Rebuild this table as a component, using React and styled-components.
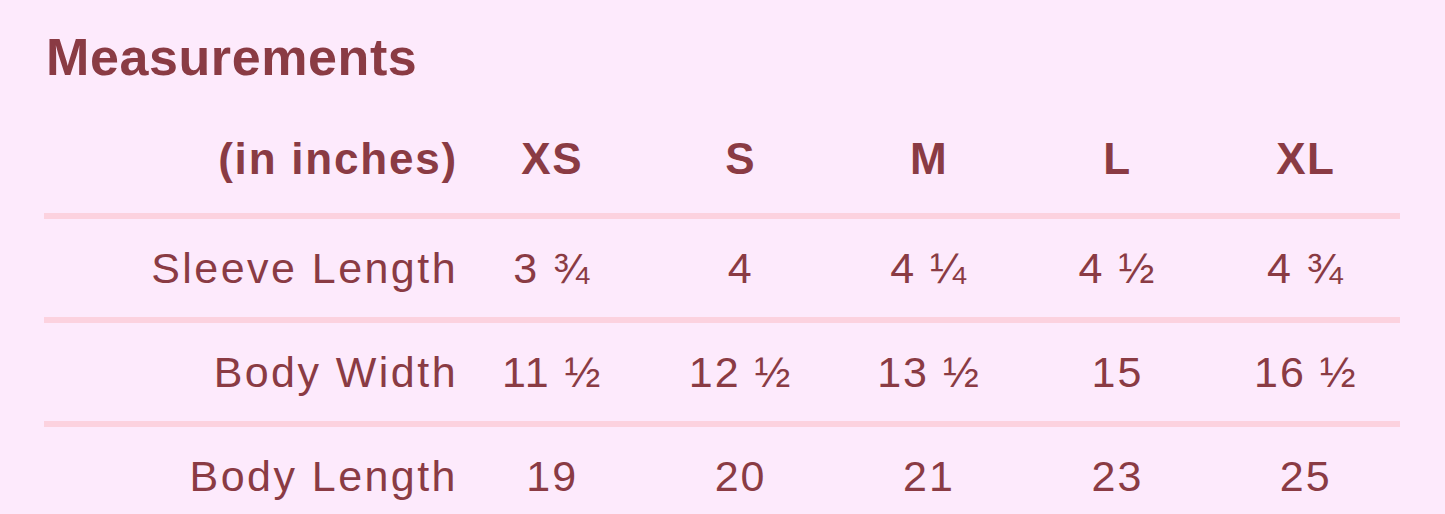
import React from "react";
import styled, { createGlobalStyle } from "styled-components";

const sizes = ["XS", "S", "M", "L", "XL"];

const rows = [
	{ label: "Sleeve Length", values: ["3 ¾", "4", "4 ¼", "4 ½", "4 ¾"] },
	{ label: "Body Width", values: ["11 ½", "12 ½", "13 ½", "15", "16 ½"] },
	{ label: "Body Length", values: ["19", "20", "21", "23", "25"] },
];

const App = () => {
	return (
		<Page>
			<GlobalStyle />
			<Title>Measurements</Title>
			<Table>
				<HeadRow>
					<Label bold>(in inches)</Label>
					{sizes.map((size) => (
						<Value bold key={size}>
							{size}
						</Value>
					))}
				</HeadRow>
				{rows.map((row) => (
					<Row key={row.label}>
						<Label>{row.label}</Label>
						{row.values.map((value, i) => (
							<Value key={i}>{value}</Value>
						))}
					</Row>
				))}
			</Table>
		</Page>
	);
};

const GlobalStyle = createGlobalStyle`
	body {
		margin: 0;
		background: #fdeafc;
		font-family: "Liberation Sans", Arial, sans-serif;
		color: #8a3b44;
	}
`;

const Page = styled.div`
	padding: 27px 0 0 44px;
	width: 1356px;
`;

const Title = styled.h1`
	margin: 0;
	padding-left: 2px;
	font-size: 52px;
	line-height: 60px;
	font-weight: 700;
	letter-spacing: 0.6px;
`;

const Table = styled.div`
	display: flex;
	flex-direction: column;
`;

const HeadRow = styled.div`
	display: grid;
	grid-template-columns: 414px repeat(5, 1fr);
	padding: 47px 0 29px;
	line-height: 50px;
`;

const Row = styled.div`
	display: grid;
	grid-template-columns: 414px repeat(5, 1fr);
	border-top: 6px solid #fcd2df;
	padding: 24px 0;
	line-height: 50px;
`;

const Label = styled.div`
	text-align: right;
	font-size: ${(p) => (p.bold ? "44px" : "43px")};
	font-weight: ${(p) => (p.bold ? 700 : 400)};
	letter-spacing: ${(p) => (p.bold ? "1.8px" : "2.45px")};
	white-space: nowrap;
`;

const Value = styled.div`
	text-align: center;
	font-size: ${(p) => (p.bold ? "44px" : "43px")};
	font-weight: ${(p) => (p.bold ? 700 : 400)};
	letter-spacing: ${(p) => (p.bold ? "1.5px" : "2px")};
	white-space: nowrap;
`;

export default App;
